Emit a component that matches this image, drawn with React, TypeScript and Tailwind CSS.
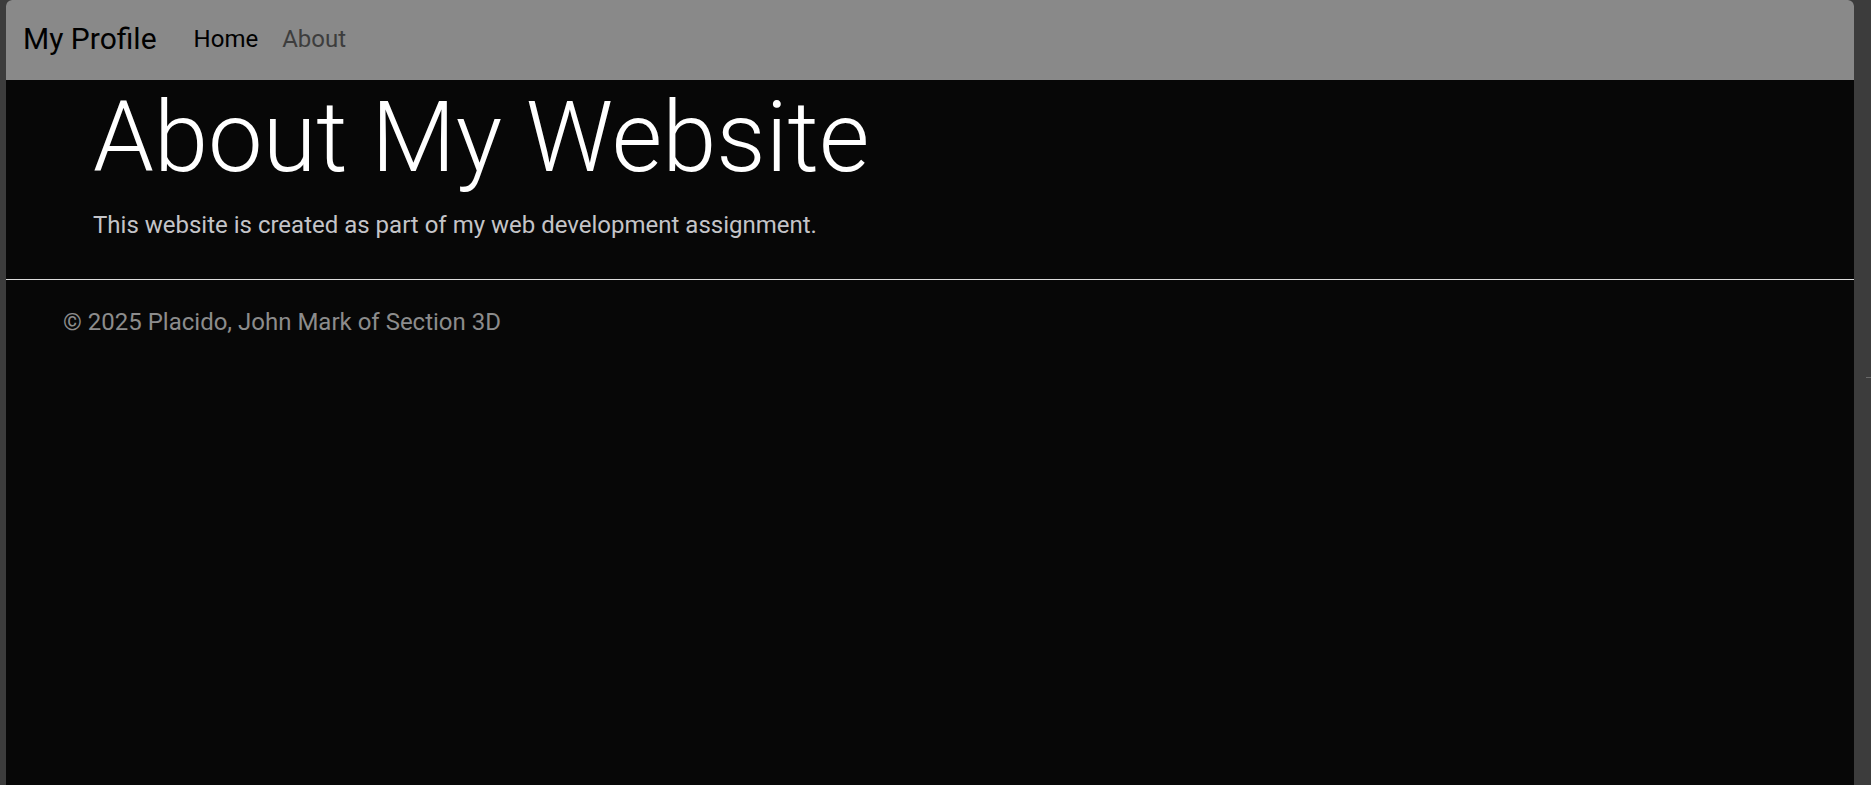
import React from 'react';

const links = [
  { label: 'Home', active: true },
  { label: 'About', active: false },
];

export default function App() {
  return (
    <div className="h-[785px] w-full flex bg-[#3c3c3c] overflow-hidden font-['Roboto',_'Liberation_Sans',_sans-serif]">
      <div className="w-[6px] shrink-0" />

      <div className="flex-1 flex flex-col bg-[#070707] rounded-t-[6px] overflow-hidden">
        <nav className="h-[80px] shrink-0 bg-[#898989] flex items-center px-[17px] pb-[3px]">
          <span className="text-[30px] leading-[45px] text-black">My Profile</span>
          <ul className="flex items-center ml-[25px]">
            {links.map(link => (
              <li key={link.label}>
                <a
                  href="#"
                  className={`block px-[12px] text-[24px] leading-[36px] ${
                    link.active ? 'text-black' : 'text-[#3d3d3d]'
                  }`}
                >
                  {link.label}
                </a>
              </li>
            ))}
          </ul>
        </nav>

        <main className="pl-[87px]">
          <h1 className="text-[97.5px] leading-[1.2] font-light text-white">About My Website</h1>
          <p className="mt-[10px] text-[24px] leading-[1.5] text-[#c4c4c8]">
            This website is created as part of my web development assignment.
          </p>
        </main>

        <hr className="mt-[36px] border-0 border-t border-[#dcdcdc]" />

        <footer className="pt-[24px] pl-[57px]">
          <p className="text-[24px] leading-[1.5] text-[#8c8c8c]">© 2025 Placido, John Mark of Section 3D</p>
        </footer>
      </div>

      <div className="w-[17px] shrink-0 flex flex-col items-end pt-[377px]">
        <div className="w-[5px] h-px bg-[#6a6a6a]" />
      </div>
    </div>
  );
}
